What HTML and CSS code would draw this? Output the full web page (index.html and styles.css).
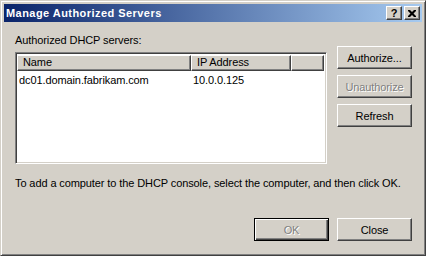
FILE: index.html
```html
<!DOCTYPE html>
<html lang="en">
<head>
    <meta charset="UTF-8">
    <title>Manage Authorized Servers</title>
    <link rel="stylesheet" href="styles.css">
</head>
<body>
    <div class="window">
        <div class="titlebar">
            <span class="title">Manage Authorized Servers</span>
            <div class="caption-buttons">
                <span class="cap-btn">?</span>
                <span class="cap-btn close">
                    <svg width="8" height="7" viewBox="0 0 8 7"><path d="M0 0h2l2 2 2-2h2v1l-2.5 2.5L8 6v1H6L4 5 2 7H0V6l2.5-2.5L0 1z" fill="#000"/></svg>
                </span>
            </div>
        </div>

        <div class="content">
            <div class="main">
                <div class="left">
                    <div class="label">Authorized DHCP servers:</div>
                    <div class="listview">
                        <div class="header">
                            <div class="col col-name">Name</div>
                            <div class="col col-ip">IP Address</div>
                            <div class="col col-rest"></div>
                        </div>
                        <div class="row">
                            <div class="cell col-name">dc01.domain.fabrikam.com</div>
                            <div class="cell col-ip">10.0.0.125</div>
                        </div>
                    </div>
                </div>
                <!-- Buttons -->
                <div class="side-buttons">
                    <div class="button">Authorize...</div>
                    <div class="button disabled">Unauthorize</div>
                    <div class="button">Refresh</div>
                </div>
            </div>

            <p class="hint">To add a computer to the DHCP console, select the computer, and then click OK.</p>

            <div class="footer">
                <div class="button default disabled">OK</div>
                <div class="button">Close</div>
            </div>
        </div>
    </div>
</body>
</html>
```

FILE: styles.css
```css
body {
    margin: 0;
    font-family: "Liberation Sans", Arial, sans-serif;
    font-size: 11px;
    letter-spacing: -0.1px;
    color: #000;
    background: #d4d0c8;
}

.window {
    width: 426px;
    height: 256px;
    box-sizing: border-box;
    background: #d4d0c8;
    border-top: 1px solid #d4d0c8;
    border-left: 1px solid #d4d0c8;
    border-right: 1px solid #404040;
    border-bottom: 1px solid #404040;
    box-shadow: inset 1px 1px 0 #fff, inset -1px -1px 0 #808080;
    padding: 3px;
    display: flex;
    flex-direction: column;
}

.titlebar {
    height: 18px;
    display: flex;
    align-items: center;
    justify-content: space-between;
    padding: 0 2px 0 2px;
    background: linear-gradient(to right, #0a246a, #a6caf0);
}
.title {
    color: #fff;
    font-weight: bold;
    font-size: 11px;
    letter-spacing: 0.45px;
}
.caption-buttons {
    display: flex;
    gap: 2px;
}
.cap-btn {
    width: 16px;
    height: 14px;
    box-sizing: border-box;
    background: #d4d0c8;
    border-top: 1px solid #fff;
    border-left: 1px solid #fff;
    border-right: 1px solid #404040;
    border-bottom: 1px solid #404040;
    box-shadow: inset -1px -1px 0 #808080;
    font-weight: bold;
    font-size: 11px;
    line-height: 12px;
    text-align: center;
    display: flex;
    align-items: center;
    justify-content: center;
}

.content {
    flex: 1;
    padding: 10px 10px 0 11px;
    display: flex;
    flex-direction: column;
}

.main {
    display: flex;
    gap: 10px;
}
.left {
    width: 313px;
}
.label {
    height: 13px;
    line-height: 13px;
    margin-top: 2px;
}
.listview {
    margin-top: 5px;
    height: 112px;
    box-sizing: border-box;
    background: #fff;
    border-top: 1px solid #808080;
    border-left: 1px solid #808080;
    border-right: 1px solid #fff;
    border-bottom: 1px solid #fff;
    box-shadow: inset 1px 1px 0 #404040, inset -1px -1px 0 #d4d0c8;
    padding: 2px 2px 2px 1px;
}
.header {
    display: flex;
    height: 16px;
}
.col {
    box-sizing: border-box;
    background: #d4d0c8;
    border-top: 1px solid #fff;
    border-left: 1px solid #fff;
    border-right: 1px solid #404040;
    border-bottom: 1px solid #404040;
    box-shadow: inset -1px -1px 0 #808080;
    padding-left: 5px;
    line-height: 13px;
}
.col-name {
    width: 174px;
}
.col-ip {
    width: 100px;
}
.col-rest {
    flex: 1;
}
.row {
    display: flex;
    height: 16px;
    line-height: 16px;
    margin-top: 1px;
}
.cell {
    padding-left: 2px;
    box-sizing: border-box;
}

.side-buttons {
    display: flex;
    flex-direction: column;
    gap: 6px;
    padding-top: 14px;
}

.button {
    width: 75px;
    height: 23px;
    box-sizing: border-box;
    background: #d4d0c8;
    border-top: 1px solid #fff;
    border-left: 1px solid #fff;
    border-right: 1px solid #404040;
    border-bottom: 1px solid #404040;
    box-shadow: inset -1px -1px 0 #808080;
    display: flex;
    align-items: center;
    justify-content: center;
}
.button.disabled {
    color: #808080;
    text-shadow: 1px 1px 0 #fff;
}
.button.default {
    border: 1px solid #000;
    box-shadow: inset 1px 1px 0 #fff, inset -1px -1px 0 #404040, inset -2px -2px 0 #808080;
}

.hint {
    margin: 13px 0 0 0;
    line-height: 13px;
}

.footer {
    display: flex;
    justify-content: flex-end;
    gap: 8px;
    margin-top: 28px;
}
```
